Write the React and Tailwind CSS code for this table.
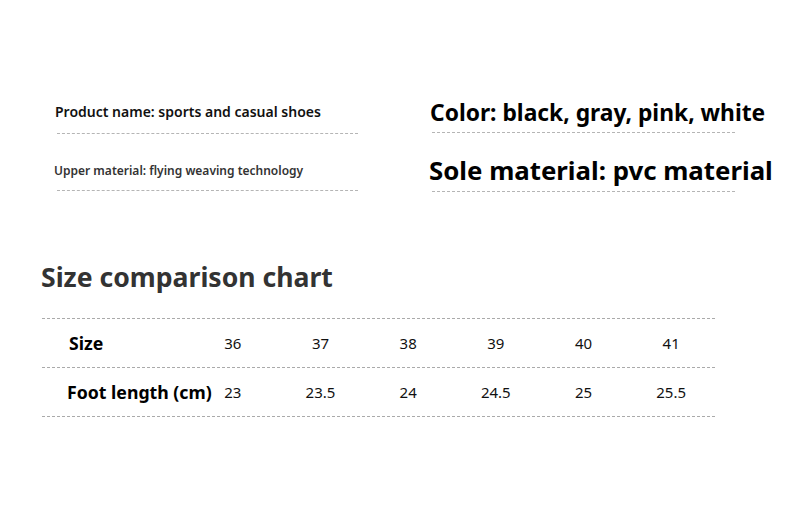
import React from 'react';

const sizes = [
    { size: '36', foot: '23' },
    { size: '37', foot: '23.5' },
    { size: '38', foot: '24' },
    { size: '39', foot: '24.5' },
    { size: '40', foot: '25' },
    { size: '41', foot: '25.5' },
];

const font = { fontFamily: '"Noto Sans", "Open Sans", sans-serif' };

const Dashed = ({ className = '' }) => (
    <div className={`border-t border-dashed border-[#b5b5b5] ${className}`} />
);

export default function App() {
    return (
        <div className="w-[790px] h-[529px] bg-white text-black overflow-hidden" style={font}>
            <div className="flex h-[200px]">
                <div className="w-[375px] pl-[55px] pt-[102px]">
                    <div className="text-[14px] leading-[20px] font-semibold text-[#111] whitespace-nowrap">
                        Product name: sports and casual shoes
                    </div>
                    <Dashed className="mt-[11px] ml-[2px] w-[301px]" />
                    <div className="mt-[29px] -ml-[1px] text-[12px] leading-[16px] font-semibold text-[#333] whitespace-nowrap">
                        Upper material: flying weaving technology
                    </div>
                    <Dashed className="mt-[11px] ml-[2px] w-[301px]" />
                </div>
                <div className="flex-1 pl-[55px] pt-[98px]">
                    <div className="text-[22.8px] leading-[30px] font-bold whitespace-nowrap">
                        Color: black, gray, pink, white
                    </div>
                    <Dashed className="mt-[4px] ml-[2px] w-[303px]" />
                    <div className="mt-[21px] -ml-[1px] text-[25.8px] leading-[32px] font-bold whitespace-nowrap">
                        Sole material: pvc material
                    </div>
                    <Dashed className="mt-[5px] ml-[2px] w-[303px]" />
                </div>
            </div>

            <div className="mt-[59px] pl-[41px] text-[26.6px] leading-[36px] font-bold text-[#333]">
                Size comparison chart
            </div>

            <div className="mt-[23px] ml-[42px] w-[673px] border-t border-dashed border-[#aaa]">
                <div className="grid grid-cols-[147px_repeat(6,1fr)] items-center h-[49px] border-b border-dashed border-[#aaa]">
                    <div className="pl-[27px] text-[17.7px] font-bold">Size</div>
                    {sizes.map(s => (
                        <div key={s.size} className="text-center text-[15px] text-[#111]">{s.size}</div>
                    ))}
                </div>
                <div className="grid grid-cols-[147px_repeat(6,1fr)] items-center h-[49px] border-b border-dashed border-[#aaa]">
                    <div className="pl-[25px] text-[17.7px] font-bold whitespace-nowrap">Foot length (cm)</div>
                    {sizes.map(s => (
                        <div key={s.size} className="text-center text-[15px] text-[#111]">{s.foot}</div>
                    ))}
                </div>
            </div>
        </div>
    );
}
